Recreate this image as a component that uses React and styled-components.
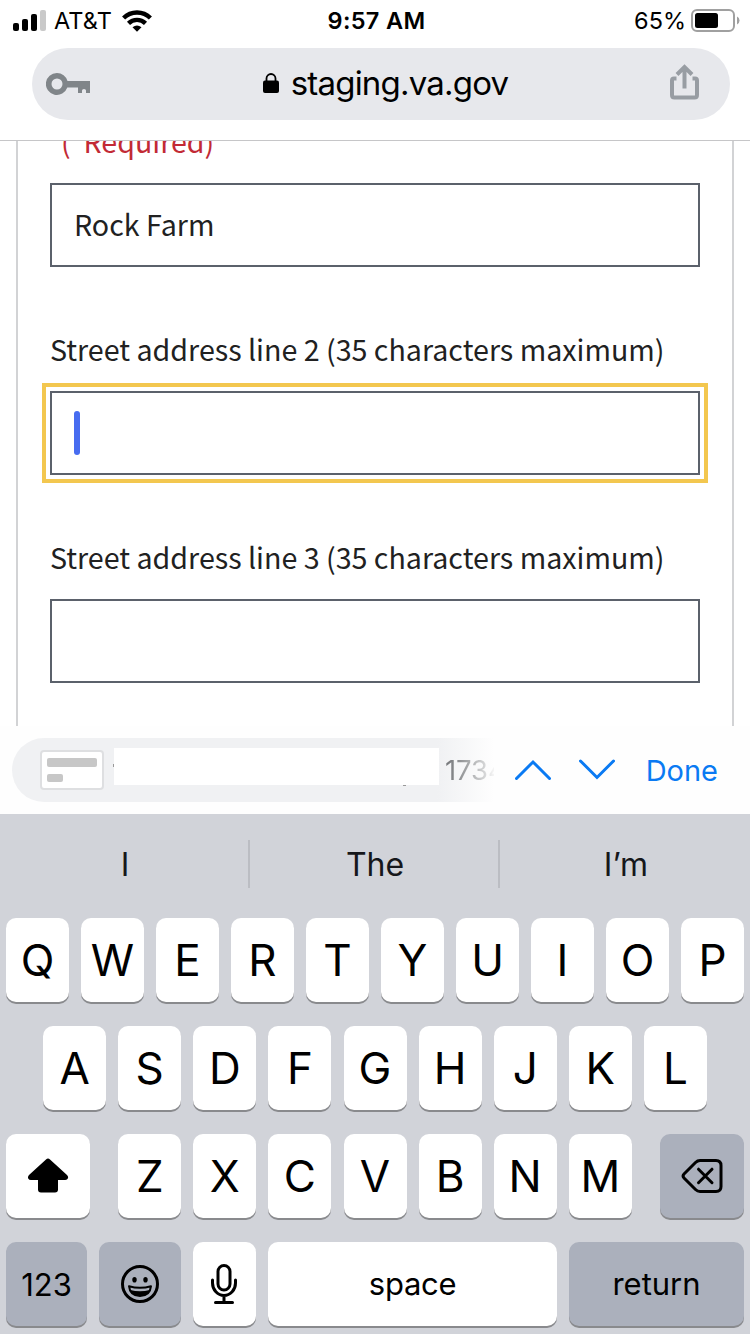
import React from "react";
import styled, { createGlobalStyle } from "styled-components";

const Global = createGlobalStyle`
  * { box-sizing: border-box; }
  body { margin: 0; background: #fff; }
`;

const Screen = styled.div`
  width: 750px;
  height: 1334px;
  display: flex;
  flex-direction: column;
  overflow: hidden;
  background: #fff;
  color: #000;
  font-family: Inter, "Liberation Sans", sans-serif;
  white-space: nowrap;
`;

const StatusBar = styled.header`
  height: 48px;
  padding: 1px 10px 8px 13px;
  display: grid;
  grid-template-columns: 1fr auto 1fr;
  align-items: center;
  font-size: 23.5px;
`;
const StatusGroup = styled.div`
  display: flex;
  align-items: center;
  justify-content: ${(p) => (p.$end ? "flex-end" : "flex-start")};
`;
const Carrier = styled.span`
  margin: 0 10px 0 8px;
  letter-spacing: 0.1px;
`;
const Clock = styled.span`
  font-weight: 600;
  letter-spacing: 0.35px;
`;
const Percent = styled.span`
  margin-right: 5px;
  letter-spacing: 0;
`;

const AddressBar = styled.div`
  height: 72px;
  flex: none;
  margin: 0 20px 20px 32px;
  padding: 0 31px 0 14px;
  border-radius: 36px;
  background: #e7e8ec;
  display: flex;
  align-items: center;
  justify-content: space-between;
`;
const Host = styled.div`
  display: flex;
  align-items: center;
  gap: 12px;
  font-size: 33px;
  letter-spacing: -0.8px;
  padding: 0 0 2px 11px;
`;

const Page = styled.main`
  height: 586px;
  flex: none;
  border-top: 1px solid #c6c6c8;
  padding: 0 16px;
  overflow: hidden;
`;
const FormCard = styled.form`
  height: 585px;
  padding: 0 32px;
  border: solid #d2d3d5;
  border-width: 0 2px;
  overflow: hidden;
  display: flex;
  flex-direction: column;
  gap: 64px;
  font-family: "Noto Sans CJK SC", "Noto Sans", sans-serif;
  font-size: 28.64px;
  color: #212121;
`;
const Field = styled.div`
  flex: none;
  margin-top: ${(p) => p.$offset || 0}px;
`;
const Label = styled.label`
  display: block;
  height: 40px;
  line-height: 35px;
  margin-bottom: 20px;
`;
const Required = styled.span`
  display: block;
  padding-left: 11px;
  color: #c22a35;
  white-space: pre;
`;
const InputBox = styled.div`
  height: 84px;
  border: 2px solid #5b616b;
  padding: 0 22px;
  display: flex;
  align-items: center;
  outline: ${(p) => (p.$focused ? "4px solid #f3c74f" : "none")};
  outline-offset: 4px;
`;
const Value = styled.span`
  padding-bottom: 4px;
`;
const Caret = styled.span`
  width: 6px;
  height: 44px;
  border-radius: 3px;
  background: #476cf0;
`;

const Accessory = styled.div`
  height: 88px;
  flex: none;
  padding: 12px 32px 12px 12px;
  display: flex;
  align-items: center;
  background: #fefefe;
`;
const AutofillPill = styled.div`
  width: 485px;
  height: 64px;
  padding-left: 28px;
  border-radius: 32px 0 0 32px;
  background: linear-gradient(90deg, #f0f1f3 425px, #fefefe 482px);
  display: flex;
  align-items: center;
`;
const AddressCard = styled.div`
  width: 64px;
  height: 40px;
  border: 2px solid #dedfe1;
  border-radius: 4px;
  background: #fff;
  padding: 6px 5px;
  display: flex;
  flex-direction: column;
  gap: 7px;
`;
const CardLine = styled.span`
  width: ${(p) => p.$width}px;
  height: ${(p) => p.$height}px;
  border-radius: 2px;
  background: #c7c7c7;
`;
const BlankPatch = styled.div`
  width: 325px;
  height: 37px;
  margin: 0 6px 7px 10px;
  background: #fff;
  position: relative;
  &::before, &::after {
    content: "";
    position: absolute;
    background: #999;
  }
  &::before { width: 1px; height: 3px; left: -1px; top: 16px; }
  &::after { width: 3px; height: 1px; right: 33px; bottom: -1px; }
`;
const Postal = styled.span`
  width: 49px;
  overflow: hidden;
  font-size: 27.5px;
  letter-spacing: -0.1px;
  color: transparent;
  background: linear-gradient(90deg, #747679 0, #8f9193 14px, #d2d3d4 39px, #f6f6f6 49px);
  background-clip: text;
`;
const Chevrons = styled.div`
  display: flex;
  gap: 28px;
  margin: 0 auto 0 18px;
`;
const Done = styled.span`
  color: #0a7af3;
  font-size: 29px;
`;

const Keyboard = styled.section`
  height: 520px;
  flex: none;
  background: #d1d3d9;
`;
const Suggestions = styled.div`
  height: 104px;
  display: grid;
  grid-template-columns: repeat(3, 1fr);
  align-items: center;
`;
const Suggestion = styled.div`
  height: 48px;
  margin-bottom: 4px;
  padding: 1px 0 0 2px;
  border-right: ${(p) => (p.$last ? "0" : "2px solid #bbbdc3")};
  display: flex;
  align-items: center;
  justify-content: center;
  font-size: 32px;
  color: #16171b;
`;
const KeyRow = styled.div`
  display: flex;
  justify-content: ${(p) => (p.$spread ? "space-between" : "center")};
  gap: ${(p) => (p.$spread ? 0 : p.$gap || 12)}px;
  padding: 0 6px;
  margin-bottom: 24px;
`;
const LetterGroup = styled.div`
  display: flex;
  gap: 12.1px;
`;
const Key = styled.div`
  width: ${(p) => p.$width || 63}px;
  height: 84px;
  flex: none;
  border-radius: 10px;
  background: ${(p) => (p.$dark ? "#abb0bc" : "#fff")};
  box-shadow: 0 2px 0 #898a8d;
  display: flex;
  align-items: center;
  justify-content: center;
  font-size: ${(p) => p.$size || 44}px;
  padding-bottom: ${(p) => p.$lift || 0}px;
  letter-spacing: ${(p) => p.$track || 0}px;
`;

const Signal = () => (
  <svg width="33" height="22" viewBox="0 0 33 22">
    <rect x="0" y="13" width="6" height="8" rx="2" />
    <rect x="9" y="9" width="6" height="12" rx="2" />
    <rect x="18" y="4" width="6" height="17" rx="2" />
    <rect x="27" y="0" width="6" height="21" rx="2" fill="#c9c9c9" />
  </svg>
);
const Wifi = () => (
  <svg width="30" height="22" viewBox="0 0 30 22">
    <g fill="none" stroke="#000" strokeWidth="4.400">
      <path d="M1.600 8 A19 19 0 0 1 28.400 8" />
      <path d="M6.500 13.300 A12.300 12.300 0 0 1 23.500 13.300" />
    </g>
    <path d="M10.500 17.200 Q15 13.800 19.500 17.200 L15 21.800Z" />
  </svg>
);
const Battery = () => (
  <svg width="49" height="24" viewBox="0 0 49 24">
    <rect x="1" y="1" width="42" height="21" rx="5" fill="none" stroke="#a0a0a0" strokeWidth="2" />
    <rect x="4" y="4" width="23" height="15" rx="2.500" />
    <path d="M46 7.500 Q48.500 8.500 48.500 11.500 T46 15.500Z" fill="#a0a0a0" />
  </svg>
);
const KeyIcon = () => (
  <svg width="45" height="24" viewBox="0 0 45 24" fill="#808589">
    <path fillRule="evenodd" d="M11 1 A11 11 0 1 0 21.300 15.500 H32 V21 H36 V18.500 Q36 17 38 17 T40 18.500 V21 H44 V9 H21.500 A11 11 0 0 0 11 1Z M11 6.500 A5.500 5.500 0 1 1 11 17.500 A5.500 5.500 0 1 1 11 6.500Z" />
  </svg>
);
const Lock = () => (
  <svg width="16" height="20" viewBox="0 0 16 20">
    <rect x="0" y="7.500" width="16" height="12.500" rx="2" />
    <path d="M3.500 9 V5.500 A4.500 4.500 0 0 1 12.500 5.500 V9" fill="none" stroke="#000" strokeWidth="1.800" />
  </svg>
);
const Share = () => (
  <svg width="30" height="40" viewBox="0 0 30 40" fill="none" stroke="#989da3" strokeWidth="4">
    <path d="M7.500 14.500 H5 Q3 14.500 3 16.500 V31 Q3 33.500 5.500 33.500 H25.500 Q28 33.500 28 31 V16.500 Q28 14.500 26 14.500 H23.500" />
    <path d="M15.500 24.500 V3 M8 10.500 L15.500 3 L23 10.500" />
  </svg>
);
const Chevron = ({ down }) => (
  <svg width="36" height="22" viewBox="0 0 36 22" fill="none" stroke="#0a7af3" strokeWidth="3" strokeLinecap="round" strokeLinejoin="miter">
    <path d={down ? "M1.500 2 L18 18.500 L34.500 2" : "M1.500 19.500 L18 3 L34.500 19.500"} />
  </svg>
);
const Shift = () => (
  <svg width="42" height="36" viewBox="0 0 42 36">
    <path d="M19 1.500 Q21 -0.300 23 1.500 L40 17 Q42 19 40.500 21 Q39.500 22 38 22 H31 V31.500 Q31 34.500 28 34.500 H14 Q11 34.500 11 31.500 V22 H4 Q2 22 1.200 20.500 Q0.500 18.700 2 17Z" />
  </svg>
);
const Backspace = () => (
  <svg width="42" height="36" viewBox="0 0 42 36" fill="none" stroke="#000" strokeWidth="3" strokeLinecap="round" strokeLinejoin="round">
    <path d="M19 2.500 H35 Q40 2.500 40 7.500 V28.500 Q40 33.500 35 33.500 H19 Q16.500 33.500 14.500 31.500 L3 20 Q1 18 3 16 L14.500 4.500 Q16.500 2.500 19 2.500Z" />
    <path d="M17.500 11.200 L31 24.700 M31 11.200 L17.500 24.700" />
  </svg>
);
const Smiley = () => (
  <svg width="38" height="38" viewBox="0 0 38 38">
    <circle cx="19" cy="19" r="17.500" fill="none" stroke="#000" strokeWidth="3" />
    <ellipse cx="13.500" cy="14.700" rx="2.200" ry="2.800" />
    <ellipse cx="24.500" cy="14.700" rx="2.200" ry="2.800" />
    <path d="M8 21.200 Q19 24.500 30 21.200 Q29 31 19 31 T8 21.200Z" fill="none" stroke="#000" strokeWidth="2" strokeLinejoin="round" />
    <path d="M9.200 25 Q19 27.500 28.800 25 Q26.500 31 19 31 T9.200 25Z" />
  </svg>
);
const Mic = () => (
  <svg width="28" height="42" viewBox="0 0 28 42" fill="none" stroke="#000" strokeWidth="3" strokeLinecap="round">
    <rect x="7" y="2.500" width="12" height="24.500" rx="6" />
    <path d="M1.500 17 V20 A11.500 12.500 0 0 0 24.500 20 V17 M13 33 V39.500 M4.500 39.500 H21.500" />
  </svg>
);

const Letters = ({ text }) => text.split("").map((c) => <Key key={c}>{c}</Key>);

export default function App() {
  return (
    <Screen>
      <Global />
      <StatusBar>
        <StatusGroup>
          <Signal />
          <Carrier>AT&amp;T</Carrier>
          <Wifi />
        </StatusGroup>
        <Clock>9:57 AM</Clock>
        <StatusGroup $end>
          <Percent>65%</Percent>
          <Battery />
        </StatusGroup>
      </StatusBar>
      <AddressBar>
        <KeyIcon />
        <Host>
          <Lock />
          <span>staging.va.gov</span>
        </Host>
        <Share />
      </AddressBar>
      <Page>
        <FormCard>
          <Field $offset={-18}>
            <Label>
              <Required>{"(  Required)"}</Required>
            </Label>
            <InputBox>
              <Value>Rock Farm</Value>
            </InputBox>
          </Field>
          <Field>
            <Label>Street address line 2 (35 characters maximum)</Label>
            <InputBox $focused>
              <Caret />
            </InputBox>
          </Field>
          <Field>
            <Label>Street address line 3 (35 characters maximum)</Label>
            <InputBox />
          </Field>
        </FormCard>
      </Page>
      <Accessory>
        <AutofillPill>
          <AddressCard>
            <CardLine $width={50} $height={9} />
            <CardLine $width={16} $height={8} />
          </AddressCard>
          <BlankPatch />
          <Postal>1734</Postal>
        </AutofillPill>
        <Chevrons>
          <Chevron />
          <Chevron down />
        </Chevrons>
        <Done>Done</Done>
      </Accessory>
      <Keyboard>
        <Suggestions>
          <Suggestion>I</Suggestion>
          <Suggestion>The</Suggestion>
          <Suggestion $last>I’m</Suggestion>
        </Suggestions>
        <KeyRow>
          <Letters text="QWERTYUIOP" />
        </KeyRow>
        <KeyRow $gap={12.1}>
          <Letters text="ASDFGHJKL" />
        </KeyRow>
        <KeyRow $spread>
          <Key $width={84}>
            <Shift />
          </Key>
          <LetterGroup>
            <Letters text="ZXCVBNM" />
          </LetterGroup>
          <Key $width={84} $dark>
            <Backspace />
          </Key>
        </KeyRow>
        <KeyRow>
          <Key $width={81} $dark $size={31}>123</Key>
          <Key $width={82} $dark>
            <Smiley />
          </Key>
          <Key>
            <Mic />
          </Key>
          <Key $width={289} $size={31} $lift={2} $track={-0.3}>space</Key>
          <Key $width={175} $dark $size={31} $lift={2}>return</Key>
        </KeyRow>
      </Keyboard>
    </Screen>
  );
}
